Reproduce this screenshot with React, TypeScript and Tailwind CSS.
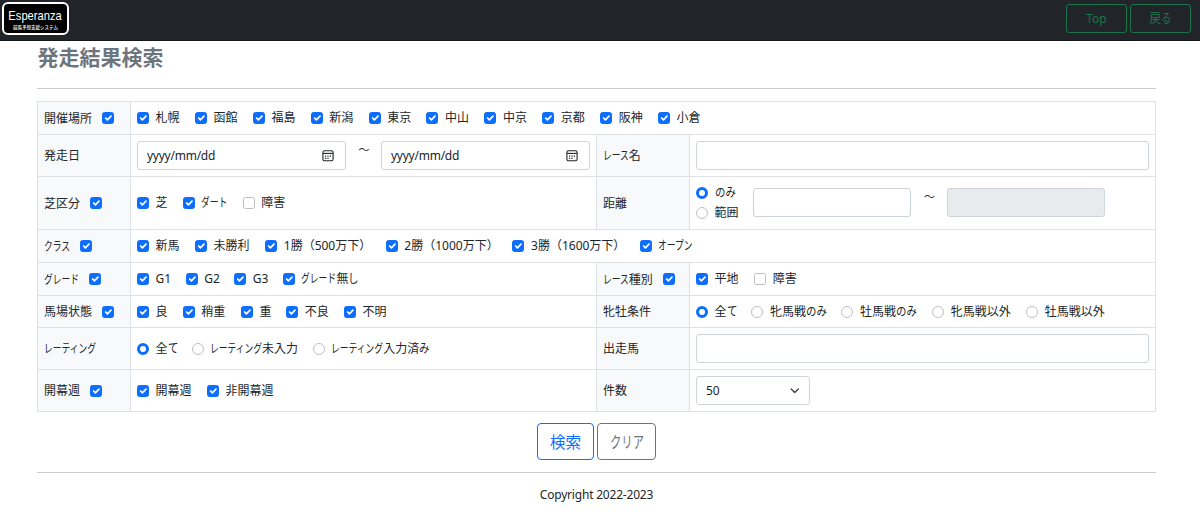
import React from 'react';

interface Option {
  label: string;
  checked?: boolean;
  // width of the label text, plus the gap to the next option
  width: string;
}

// Kana are narrower than kanji, like in a UI font. The negative margin
// takes back the space that the scaled run leaves behind.
const Ja: React.FC<{ text: string }> = ({ text }) => (
  <span className="whitespace-nowrap">
    {text.split(/([ァ-ヺー]+|[ぁ-ゖ]+)/).filter(Boolean).map((part, i) => {
      if (/^[ァ-ヺー]/.test(part)) {
        return (
          <span key={i} className="inline-block origin-left scale-x-[0.73]" style={{ marginRight: `${-0.27 * part.length}em` }}>
            {part}
          </span>
        );
      }
      if (/^[ぁ-ゖ]/.test(part)) {
        return (
          <span key={i} className="inline-block origin-left scale-x-[0.87]" style={{ marginRight: `${-0.13 * part.length}em` }}>
            {part}
          </span>
        );
      }
      return <span key={i}>{part}</span>;
    })}
  </span>
);

const Check: React.FC<{ checked?: boolean }> = ({ checked = true }) => (
  <span className="grid size-3 shrink-0">
    <input
      type="checkbox"
      defaultChecked={checked}
      className="peer col-start-1 row-start-1 size-3 appearance-none rounded-[2.5px] border border-[#bfbfbf] bg-white checked:border-[#0d6efd] checked:bg-[#0d6efd]"
    />
    <svg viewBox="0 0 20 20" className="pointer-events-none col-start-1 row-start-1 size-3 opacity-0 peer-checked:opacity-100">
      <path d="M6 10l3 3l6-6" fill="none" stroke="#fff" strokeWidth="2.8" strokeLinecap="round" strokeLinejoin="round" />
    </svg>
  </span>
);

const Radio: React.FC<{ name: string; checked?: boolean }> = ({ name, checked = false }) => (
  <input
    type="radio"
    name={name}
    defaultChecked={checked}
    className="size-3 shrink-0 appearance-none rounded-full border border-[#bfbfbf] bg-white checked:border-[3.5px] checked:border-[#0d6efd]"
  />
);

const Head: React.FC<{ text: string; check?: boolean }> = ({ text, check }) => (
  <div className="flex items-center gap-[10px] bg-[#f8f9fa] pl-[6px] pt-px whitespace-nowrap">
    <Ja text={text} />
    {check && <span className="mb-px"><Check /></span>}
  </div>
);

const Options: React.FC<{ items: Option[]; radio?: string }> = ({ items, radio }) => (
  <div className="flex items-center bg-white pl-[6px]">
    {items.map((item) => (
      <label key={item.label} className="flex shrink-0 items-center gap-[6.6px] whitespace-nowrap">
        {radio ? <Radio name={radio} checked={item.checked} /> : <Check checked={item.checked} />}
        <span className={item.width}><Ja text={item.label} /></span>
      </label>
    ))}
  </div>
);

const DateField: React.FC = () => (
  <div className="flex h-[29px] w-[209px] items-center justify-between rounded-[3px] border border-[#ced4da] bg-white pl-[9px] pr-[11px]">
    <input
      type="text"
      placeholder="yyyy/mm/dd"
      className="w-[120px] bg-transparent tracking-[-0.25px] outline-none placeholder:text-[#212529]"
    />
    <svg viewBox="0 0 12 12" className="size-3" fill="none" stroke="#212529">
      <rect x="0.9" y="0.8" width="10.2" height="10" rx="1.6" strokeWidth="1.1" />
      <path d="M0.9 3.4h10.2" strokeWidth="1.1" />
      <path d="M3 6.1h1.2M5.4 6.1h1.2M7.8 6.1H9M3 8.3h1.2M5.4 8.3h1.2" strokeWidth="1.2" />
    </svg>
  </div>
);

const places: Option[] = ['札幌', '函館', '福島', '新潟', '東京', '中山', '中京', '京都', '阪神', '小倉'].map(
  (label) => ({ label, width: 'w-[39.3px]' })
);

const turf: Option[] = [
  { label: '芝', width: 'w-[27px]' },
  { label: 'ダート', width: 'w-[41.4px]' },
  { label: '障害', width: 'w-[40px]', checked: false },
];

const classes: Option[] = [
  { label: '新馬', width: 'w-[39.3px]' },
  { label: '未勝利', width: 'w-[51.7px]' },
  { label: '1勝（500万下）', width: 'w-[102px]' },
  { label: '2勝（1000万下）', width: 'w-[108.1px]' },
  { label: '3勝（1600万下）', width: 'w-[108.6px]' },
  { label: 'オープン', width: 'w-[50px]' },
];

const grades: Option[] = [
  { label: 'G1', width: 'w-[30px]' },
  { label: 'G2', width: 'w-[30px]' },
  { label: 'G3', width: 'w-[30px]' },
  { label: 'グレード無し', width: 'w-[70px]' },
];

const kinds: Option[] = [
  { label: '平地', width: 'w-[39.6px]' },
  { label: '障害', width: 'w-[40px]', checked: false },
];

const conditions: Option[] = [
  { label: '良', width: 'w-[27px]' },
  { label: '稍重', width: 'w-[39.6px]' },
  { label: '重', width: 'w-[26.8px]' },
  { label: '不良', width: 'w-[39.2px]' },
  { label: '不明', width: 'w-[40px]' },
];

const sexes: Option[] = [
  { label: '全て', width: 'w-[36.7px]', checked: true },
  { label: '牝馬戦のみ', width: 'w-[71.6px]' },
  { label: '牡馬戦のみ', width: 'w-[72.2px]' },
  { label: '牝馬戦以外', width: 'w-[75.4px]' },
  { label: '牡馬戦以外', width: 'w-[75px]' },
];

const ratings: Option[] = [
  { label: '全て', width: 'w-[36px]', checked: true },
  { label: 'レーティング未入力', width: 'w-[102.6px]' },
  { label: 'レーティング入力済み', width: 'w-[110px]' },
];

const openings: Option[] = [
  { label: '開幕週', width: 'w-[51.4px]' },
  { label: '非開幕週', width: 'w-[60px]' },
];

const textField = 'h-[29px] rounded-[3px] border border-[#ced4da] bg-white px-[9px] outline-none';

const App: React.FC = () => {
  return (
    <div className="h-[512px] overflow-hidden bg-white font-['Noto_Sans','Noto_Sans_CJK_JP',sans-serif] text-[12px] leading-[18px] text-[#212529]">
      <nav className="flex h-[41px] items-start justify-between border-b border-[#15181b] bg-[#212529] pl-[2px] pr-[9px]">
        <div className="mt-[2px] flex h-[33px] w-[67px] flex-col items-center rounded-[6px] border-2 border-white bg-black text-white">
          <span className="mt-[3px] scale-x-[0.86] font-['Liberation_Sans',sans-serif] text-[13px] leading-[17px]">Esperanza</span>
          <span className="text-[4.5px] leading-[6px] font-medium whitespace-nowrap">競馬予想支援システム</span>
        </div>
        <div className="mt-[4px] flex gap-[3px] text-[#198754]/85">
          <button className="h-[29px] w-[61px] rounded-[3px] border border-[#198754]/80">Top</button>
          <button className="h-[29px] w-[61px] rounded-[3px] border border-[#198754]/80"><Ja text="戻る" /></button>
        </div>
      </nav>

      <main className="ml-[37px] w-[1119px]">
        <h1 className="h-[47px] pl-[0.5px] pt-px text-[21px] leading-[30px] font-bold text-[#6c757d]">発走結果検索</h1>
        <hr className="border-[#c8cacb]" />

        <div className="mt-3 grid grid-cols-[92px_465px_92px_465px] grid-rows-[32px_41px_52px_32px_32px_31px_41px_41px] gap-px border border-[#dee2e6] bg-[#dee2e6]">
          <Head text="開催場所" check />
          <div className="col-span-3 grid"><Options items={places} /></div>

          <Head text="発走日" />
          <div className="flex items-center bg-white pl-[6px]">
            <DateField />
            <span className="mb-[11px] w-[35px] pl-px text-center text-[11px]">～</span>
            <DateField />
          </div>
          <Head text="レース名" />
          <div className="flex items-center bg-white px-[6px]">
            <input type="text" className={`${textField} w-full`} />
          </div>

          <Head text="芝区分" check />
          <Options items={turf} />
          <Head text="距離" />
          <div className="flex items-center bg-white pb-px pl-[6px]">
            <div className="flex w-[57px] flex-col gap-[2px]">
              <label className="flex items-center gap-[6.6px]"><Radio name="distance" checked /><Ja text="のみ" /></label>
              <label className="flex items-center gap-[6.6px]"><Radio name="distance" />範囲</label>
            </div>
            <input type="text" className={`${textField} w-[158px]`} />
            <span className="mb-[11px] w-9 pl-px text-center text-[11px]">～</span>
            <input type="text" disabled className="h-[29px] w-[158px] rounded-[3px] border border-[#ced4da] bg-[#e9eaee]" />
          </div>

          <Head text="クラス" check />
          <div className="col-span-3 grid"><Options items={classes} /></div>

          <Head text="グレード" check />
          <Options items={grades} />
          <Head text="レース種別" check />
          <Options items={kinds} />

          <Head text="馬場状態" check />
          <Options items={conditions} />
          <Head text="牝牡条件" />
          <Options items={sexes} radio="sex" />

          <Head text="レーティング" />
          <Options items={ratings} radio="rating" />
          <Head text="出走馬" />
          <div className="flex items-center bg-white px-[6px]">
            <input type="text" className={`${textField} w-full`} />
          </div>

          <Head text="開幕週" check />
          <Options items={openings} />
          <Head text="件数" />
          <div className="flex items-center bg-white px-[6px]">
            <button className={`${textField} flex w-[114px] items-center justify-between`}>
              50
              <svg viewBox="0 0 16 16" className="mr-[1px] size-[9.5px]" fill="none" stroke="#343a40" strokeWidth="2" strokeLinecap="round" strokeLinejoin="round">
                <path d="M2 5l6 6 6-6" />
              </svg>
            </button>
          </div>
        </div>

        <div className="mt-[11px] flex justify-center gap-[3px] text-[15.5px]">
          <button className="h-[37px] w-[57px] rounded-[4px] border border-[#0d6efd] text-[#0d6efd]">検索</button>
          <button className="h-[37px] w-[59px] rounded-[4px] border border-[#6c757d] text-[#6c757d]"><Ja text="クリア" /></button>
        </div>

        <hr className="mt-3 border-[#c8cacb]" />
        <p className="mt-[13px] text-center tracking-[-0.2px]">Copyright 2022-2023</p>
      </main>
    </div>
  );
};

export default App;
